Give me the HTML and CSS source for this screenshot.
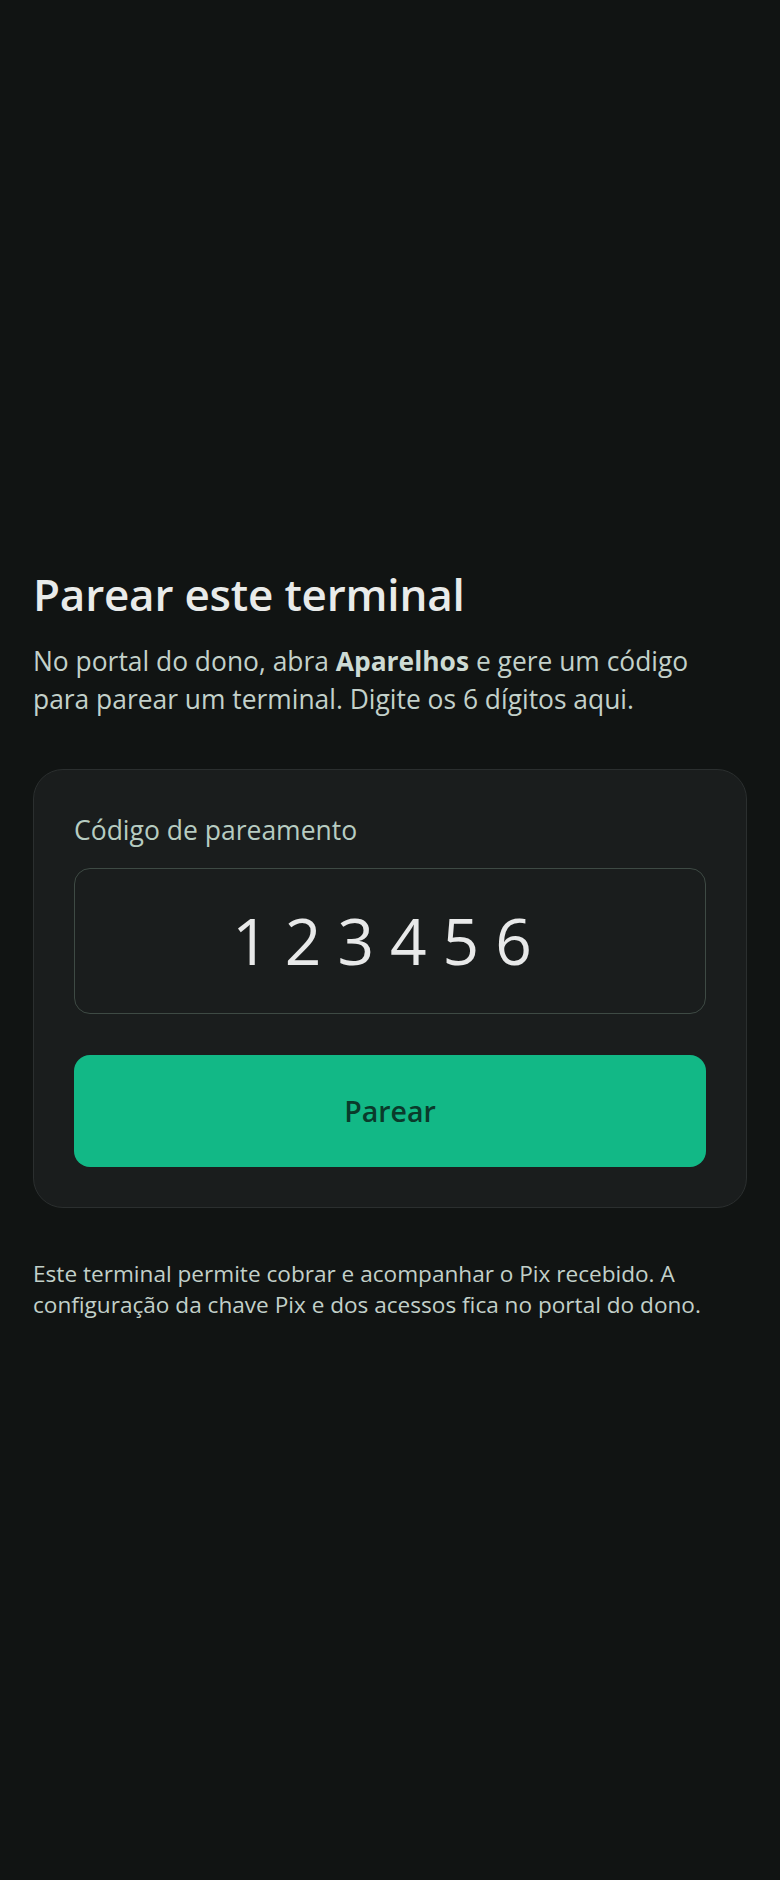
FILE: index.html
```html
<!DOCTYPE html>
<html lang="pt-BR">
<head>
<meta charset="utf-8">
<title>Parear este terminal</title>
<link rel="stylesheet" href="styles.css">
</head>
<body>
<main class="page">
  <section class="pair">
    <h1 class="title">Parear este terminal</h1>
    <p class="lead">No portal do dono, abra <strong>Aparelhos</strong> e gere um código para parear um terminal. Digite os 6 dígitos aqui.</p>
    <form class="card">
      <label class="label" for="code">Código de pareamento</label>
      <input class="code" id="code" type="text" inputmode="numeric" value="123456" maxlength="6">
      <button class="btn" type="button">Parear</button>
    </form>
    <p class="note">Este terminal permite cobrar e acompanhar o Pix recebido. A configuração da chave Pix e dos acessos fica no portal do dono.</p>
  </section>
</main>
</body>
</html>
```

FILE: styles.css
```css
* { box-sizing: border-box; }
html, body { margin: 0; padding: 0; }
body {
  background: #111413;
  font-family: "Open Sans", "Noto Sans", "Liberation Sans", sans-serif;
  color: #e6e8e7;
}
.page {
  min-height: 100vh;
  display: flex;
  flex-direction: column;
  justify-content: center;
  padding: 3px 33px 0;
}
.pair {
  display: flex;
  flex-direction: column;
}
.title {
  margin: 0;
  font-size: 44px;
  font-weight: 600;
  line-height: 60px;
  color: #e9ebea;
  letter-spacing: -0.2px;
}
.lead {
  margin: 18px 0 0;
  font-size: 26.4px;
  line-height: 38px;
  color: #c3d1ca;
}
.lead strong {
  font-weight: 700;
  color: #cddbd4;
}
.card {
  margin-top: 51px;
  background: #1a1d1d;
  border: 1px solid #2b2f2f;
  border-radius: 30px;
  padding: 41px 40px 40px;
  display: flex;
  flex-direction: column;
}
.label {
  font-size: 26.5px;
  line-height: 38px;
  color: #b7ccc1;
}
.code {
  margin-top: 19px;
  height: 146px;
  width: 100%;
  background: #1a1d1d;
  border: 1.5px solid #3e4a44;
  border-radius: 16px;
  color: #e8e9e9;
  font-family: inherit;
  font-size: 64px;
  font-weight: 400;
  letter-spacing: 16px;
  text-align: center;
  outline: none;
  padding: 0;
}
.btn {
  margin-top: 41px;
  height: 112px;
  border: 0;
  border-radius: 16px;
  background: #12b886;
  color: #0a3a2b;
  font-family: inherit;
  font-size: 28.5px;
  font-weight: 600;
  cursor: pointer;
}
.note {
  margin: 50px 0 0;
  font-size: 22.6px;
  line-height: 31px;
  color: #c2d0c9;
}
```
